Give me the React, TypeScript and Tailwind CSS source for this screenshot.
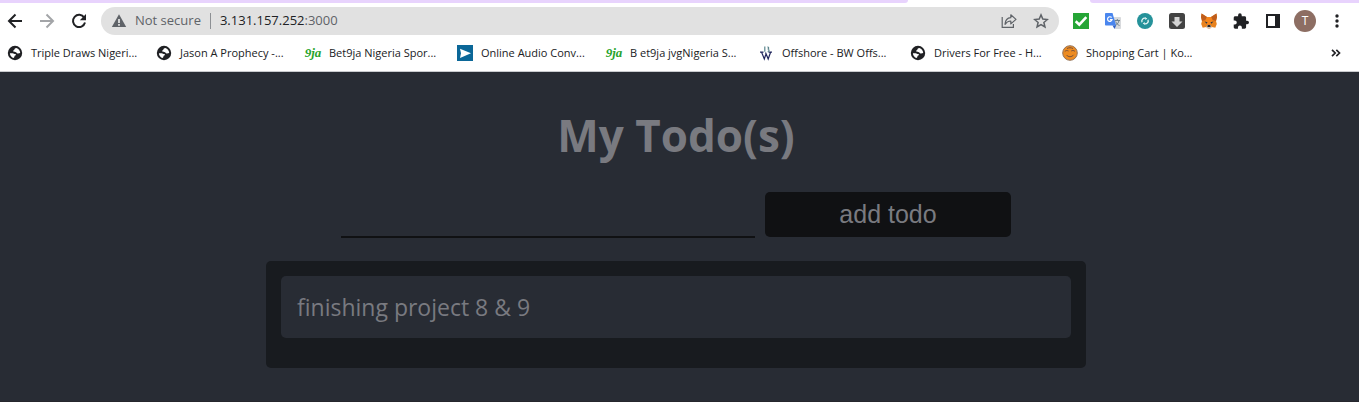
import React, { useState } from "react";
import type { ReactNode, FormEvent } from "react";

const iconButton = "flex h-8 w-8 shrink-0 items-center justify-center";

function ArrowLeft() {
  return (
    <svg width="16" height="16" viewBox="0 0 16 16" fill="none" stroke="#202124" strokeWidth="2">
      <path d="M15 8H2.5M8.5 1.5L2 8l6.5 6.5" />
    </svg>
  );
}

function ArrowRight() {
  return (
    <svg width="16" height="16" viewBox="0 0 16 16" fill="none" stroke="#a3a5a8" strokeWidth="2">
      <path d="M1 8h12.5M7.5 1.5L14 8l-6.5 6.5" />
    </svg>
  );
}

function Reload() {
  return (
    <svg width="16" height="16" viewBox="0 0 16 16">
      <path d="M13.2 4.6A6.1 6.1 0 1 0 14 9.5" fill="none" stroke="#202124" strokeWidth="2" />
      <path d="M15 1v6.2H8.8z" fill="#202124" />
    </svg>
  );
}

function Warning() {
  return (
    <svg width="16" height="16" viewBox="0 0 16 16">
      <path d="M8 1.3L15.2 14H.8z" fill="#5f6368" />
      <path d="M7.1 6h1.8v4H7.1zM7.1 11h1.8v1.7H7.1z" fill="#e1e1e1" />
    </svg>
  );
}

function Share() {
  return (
    <svg width="16" height="16" viewBox="0 0 16 16" fill="none" stroke="#5f6368" strokeWidth="1.2">
      <path d="M1.2 4v10.4h11.2V11" />
      <path d="M4 11.3C4.3 7.2 6.3 4.9 9.8 4.7V1.8L15 6.4l-5.2 4.5V8C7.3 8 5.5 9 4 11.3z" strokeLinejoin="round" />
    </svg>
  );
}

function Star() {
  return (
    <svg width="16" height="16" viewBox="0 0 16 16" fill="none" stroke="#5f6368" strokeWidth="1.5">
      <path d="M8 1.9l1.8 4.2 4.6.4-3.5 3 1.05 4.5L8 11.6 4.05 14l1.05-4.5-3.5-3 4.6-.4z" />
    </svg>
  );
}

function Check() {
  return (
    <svg width="16" height="16" viewBox="0 0 16 16">
      <path d="M0 0h16v16H0z" fill="#25a536" />
      <path d="M2.7 8.3l3.6 3.4 7-7.6" fill="none" stroke="#fff" strokeWidth="2.6" />
    </svg>
  );
}

function Translate() {
  return (
    <svg width="16" height="16" viewBox="0 0 16 16">
      <path d="M7 4h8.2c.5 0 .8.3.8.8v10.400c0 .5-.3.8-.8.8H10z" fill="#d8dadd" />
      <path d="M9.5 7.5H15M12.3 6v1.5M14 7.5c-.5 2.5-1.7 4-4 5M10.7 8.5c.7 2 2 3.3 3.8 4" fill="none" stroke="#71838d" strokeWidth="1" />
      <path d="M.8 0h6.7l3.6 12.5H.8c-.5 0-.8-.3-.8-.8V.8C0 .3.3 0 .8 0z" fill="#4a86ee" />
      <path d="M7.5 12.5h3.6L9.5 16z" fill="#2d5fc5" />
      <path d="M6.6 4.5a2.3 2.3 0 1 0 .5 2.2H4.9" fill="none" stroke="#fff" strokeWidth="1.2" />
    </svg>
  );
}

function Sync() {
  return (
    <svg width="16" height="16" viewBox="0 0 16 16">
      <circle cx="8" cy="8" r="8" fill="#25929a" />
      <path d="M5 9.2a3 3 0 0 1 3.6-4M11 6.8a3 3 0 0 1-3.6 4" fill="none" stroke="#e5f5f5" strokeWidth="1.3" />
      <path d="M8 4.2l2.3 1.2L8.4 7zM8 11.8l-2.3-1.2L7.6 9z" fill="#e5f5f5" />
    </svg>
  );
}

function Download() {
  return (
    <svg width="16" height="16" viewBox="0 0 16 16">
      <rect width="16" height="16" rx="2.5" fill="#434343" />
      <path d="M5.5 4h5v4.5h3L8 14 2.5 8.5h3z" fill="#d5d5d5" />
    </svg>
  );
}

function Fox() {
  return (
    <svg width="16" height="16" viewBox="0 0 16 16">
      <path d="M.6.5L6 4h4L15.4.5 16 4l-1 4 .8 3-1.5 3.8-3.5-.8L9 15.5H7L5.2 14l-3.5.8L.2 11 1 8 0 4z" fill="#e8821e" />
      <path d="M.6.5L6 4 4.5 7 1 8 0 4zM15.4.5L10 4l1.5 3 3.5 1 1-4z" fill="#bf5d1c" />
      <path d="M4.5 7L6 4h4l1.5 3L10 11H6z" fill="#f6851b" />
      <path d="M3.5 8.5l3 .8-.8 1.5zM12.5 8.5l-3 .8.8 1.5z" fill="#263647" />
      <path d="M5.2 14L6.5 12h3l1.3 2L9 15.5H7z" fill="#d1c1b3" />
      <path d="M6.7 12h2.6l.3 1.9H6.4z" fill="#22252d" />
    </svg>
  );
}

function Puzzle() {
  return (
    <svg width="16" height="16" viewBox="1 0.5 22 22" fill="#202124">
      <path d="M20.5 11H19V7c0-1.1-.9-2-2-2h-4V3.5a2.5 2.5 0 0 0-5 0V5H4c-1.1 0-2 .9-2 2v3.8h1.5a2.7 2.7 0 0 1 0 5.4H2V20c0 1.1.9 2 2 2h3.8v-1.5a2.7 2.7 0 0 1 5.4 0V22H17c1.1 0 2-.9 2-2v-4h1.5a2.5 2.5 0 0 0 0-5z" />
    </svg>
  );
}

function SidePanel() {
  return (
    <svg width="14" height="14" viewBox="0 0 14 14">
      <path d="M1 1h12v12H1z" fill="#fff" stroke="#202124" strokeWidth="2" />
      <path d="M9 1h4v12H9z" fill="#202124" />
    </svg>
  );
}

function Kebab() {
  return (
    <svg width="4" height="14" viewBox="0 0 4 14" fill="#202124">
      <circle cx="2" cy="2" r="1.7" />
      <circle cx="2" cy="7" r="1.7" />
      <circle cx="2" cy="12" r="1.7" />
    </svg>
  );
}

function Globe() {
  return (
    <svg width="16" height="16" viewBox="0 0 16 16">
      <circle cx="8" cy="8" r="7.2" fill="#202124" />
      <path d="M9.3 3C8 3.2 7.6 3.8 7.4 4.6c-.2.8-1.3.8-1.2 1.5.1.8 1 .9 2 .9 1.500 0 1.300 1.300 2.500 1.400.9.1 1.500-.2 2.500-.3 0-2.400-1.400-4.400-3.900-5.100z" fill="#fff" />
      <path d="M2.900 8.200h2.700c1.300 0 1.500.8 2.600.9 1.100.1.900 1.300 0 1.500-.8.2-.7.8-.8 1.300-.1.500-.7.700-.8 1.200-2-.6-3.600-2.600-3.700-4.900z" fill="#fff" />
    </svg>
  );
}

function NineJa() {
  return (
    <span aria-hidden="true" className="font-['Liberation_Serif',serif] text-[13px] leading-4 font-bold text-[#27a32b] italic">
      9ja
    </span>
  );
}

function AudioIcon() {
  return (
    <svg width="16" height="16" viewBox="0 0 16 16">
      <path d="M0 0h16v16H0z" fill="#0b6798" />
      <path d="M3 3.7L14 8.3 3 13l1-4.7z" fill="#fff" />
    </svg>
  );
}

function OffshoreIcon() {
  return (
    <svg width="16" height="16" viewBox="0 0 16 16" fill="none" strokeWidth="1.2">
      <path d="M2 7.200h3.500M3.700 7.500l2.600 6.500 1.500-4.500M7.500 7.500l2.700 6.500 2.300-6.500M10.500 7.200H14" stroke="#23285e" />
      <path d="M6.800 1.500v5.300M9.500 1.800c1.700.4 1.500 1.900.2 2.200 1.800.3 1.800 2.300 0 2.700" stroke="#5b858d" />
    </svg>
  );
}

function SmileIcon() {
  return (
    <svg width="16" height="16" viewBox="0 0 16 16">
      <circle cx="8" cy="8" r="7.3" fill="#ed8b20" stroke="#95745a" strokeWidth="1" />
      <path d="M2.8 6.5C4 5.3 5.2 5.3 6.5 6M9.2 6c1.2-.7 2.5-.7 3.7.3M4.500 10c1.800 2.300 5.300 2.300 7.200-.2M5 3.500c2-1 4-1 6 0" fill="none" stroke="#78503a" strokeWidth="1" />
    </svg>
  );
}

type Bookmark = { title: string; icon: ReactNode; size: string };

const bookmarks: Bookmark[] = [
  { title: "Triple Draws Nigeri...", icon: <Globe />, size: "w-[149px]" },
  { title: "Jason A Prophecy -...", icon: <Globe />, size: "w-[149px]" },
  { title: "Bet9ja Nigeria Spor...", icon: <NineJa />, size: "w-[152px]" },
  { title: "Online Audio Conv...", icon: <AudioIcon />, size: "w-[149px]" },
  { title: "B et9ja jvgNigeria S...", icon: <NineJa />, size: "w-[152px]" },
  { title: "Offshore - BW Offs...", icon: <OffshoreIcon />, size: "w-[152px]" },
  { title: "Drivers For Free - H...", icon: <Globe />, size: "w-[152px]" },
  { title: "Shopping Cart | Ko...", icon: <SmileIcon />, size: "w-[152px]" },
];

const extensions: { label: string; icon: ReactNode }[] = [
  { label: "Checker", icon: <Check /> },
  { label: "Translate", icon: <Translate /> },
  { label: "Sync", icon: <Sync /> },
  { label: "Downloads", icon: <Download /> },
  { label: "Wallet", icon: <Fox /> },
  { label: "Extensions", icon: <Puzzle /> },
  { label: "Side panel", icon: <SidePanel /> },
];

function BrowserBar() {
  return (
    <header className="border-b border-[#c9cbce] bg-white text-[#202124]">
      <div className="flex h-[3px]">
        <div className="w-[908px] rounded-br-[4px] bg-[#e8d3fd]" />
        <div className="w-[182px]" />
        <div className="flex-1 rounded-bl-[4px] bg-[#e8d3fd]" />
      </div>
      <div className="flex h-9 items-center pr-[6px]">
        <nav aria-label="History" className="flex w-[101px] shrink-0">
          <button aria-label="Back" className="h-8 w-8 pl-[7px]"><ArrowLeft /></button>
          <button aria-label="Forward" className="h-8 w-8 pl-[7px]"><ArrowRight /></button>
          <button aria-label="Reload" className="h-8 w-8 pl-[7px]"><Reload /></button>
        </nav>
        <div className="flex h-7 min-w-0 flex-1 items-center rounded-full bg-[#e1e1e1] pr-[2px] pl-[10px] text-[13px]">
          <Warning />
          <span className="ml-2 text-[#5f6368]">Not secure</span>
          <span className="mx-[9px] h-4 w-px bg-[#8d9094]" />
          <span className="flex-1">
            3.131.157.252<span className="text-[#5f6368]">:3000</span>
          </span>
          <button aria-label="Share" className={iconButton}><Share /></button>
          <button aria-label="Bookmark this tab" className={iconButton}><Star /></button>
        </div>
        <div className="ml-[6px] flex shrink-0">
          {extensions.map((e) => (
            <button key={e.label} aria-label={e.label} className={iconButton}>{e.icon}</button>
          ))}
          <button aria-label="Profile" className={iconButton}>
            <span className="flex h-[22px] w-[22px] items-center justify-center rounded-full bg-[#8d6e63] text-[12px] text-white">T</span>
          </button>
          <button aria-label="Menu" className={iconButton}><Kebab /></button>
        </div>
      </div>
      <nav aria-label="Bookmarks" className="flex h-8 items-center pb-[4px] pl-[7px]">
        {bookmarks.map((b) => (
          <a key={b.title} href="#" className={`flex shrink-0 items-center gap-2 text-[11px] leading-4 whitespace-nowrap ${b.size}`}>
            <span className="flex h-4 w-4 shrink-0 items-center justify-center">{b.icon}</span>
            {b.title}
          </a>
        ))}
        <button aria-label="More bookmarks" className="mr-[18px] ml-auto">
          <svg width="10" height="8" viewBox="0 0 10 8" fill="none" stroke="#202124" strokeWidth="1.7">
            <path d="M1 .8L4.2 4 1 7.2M5.3.8L8.5 4 5.3 7.2" />
          </svg>
        </button>
      </nav>
    </header>
  );
}

export default function App() {
  const [todos, setTodos] = useState(["finishing project 8 & 9"]);
  const [draft, setDraft] = useState("");

  const addTodo = (event: FormEvent) => {
    event.preventDefault();
    if (!draft.trim()) return;
    setTodos([...todos, draft.trim()]);
    setDraft("");
  };

  return (
    <div className="flex min-h-screen flex-col bg-[#282c34] font-['Open_Sans','Noto_Sans',sans-serif]">
      <BrowserBar />
      <main className="flex flex-1 flex-col items-center border-b border-[#26272d] pt-[31px] pr-[7px] pb-8 text-[#797a80]">
        <h1 className="text-[44px] leading-[64px] font-bold">My Todo(s)</h1>
        <form onSubmit={addTodo} className="mt-[25px] flex w-full max-w-[670px] gap-[10px]">
          <input
            aria-label="New todo"
            value={draft}
            onChange={(e) => setDraft(e.target.value)}
            className="h-[46px] min-w-0 flex-1 border-b-2 border-[#101113] bg-transparent text-[25px] outline-none"
          />
          <button type="submit" className="h-[45px] w-[246px] rounded-[5px] bg-[#101113] font-['Liberation_Sans',Arial,sans-serif] text-[25px]">
            add todo
          </button>
        </form>
        <ul className="mt-[23px] w-full max-w-[820px] rounded-[5px] bg-[#181b1f] p-[15px] pb-[30px]">
          {todos.map((todo, i) => (
            <li key={i} className="rounded-[5px] bg-[#282c34] px-4 pt-[14px] pb-[14px] text-[23px] leading-[34px]">
              {todo}
            </li>
          ))}
        </ul>
      </main>
    </div>
  );
}
